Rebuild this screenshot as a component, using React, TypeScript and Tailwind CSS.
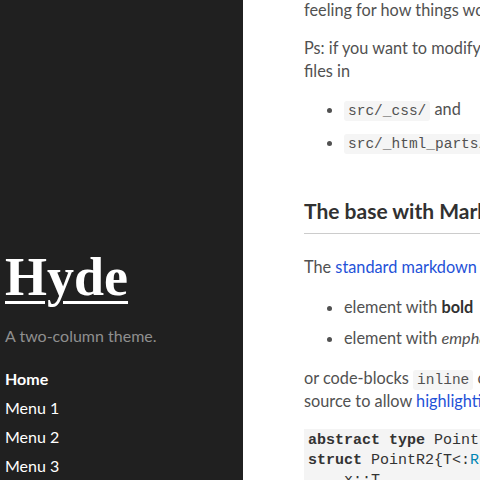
export default function App() {
  return (
    <div className="flex h-[480px] w-[480px] overflow-hidden bg-white font-['Lato','Open_Sans',sans-serif]">
      {/* Sidebar */}
      <aside className="flex w-[243px] shrink-0 flex-col justify-end bg-[#202020] pl-[5px] text-white">
        <h1 className="font-['Liberation_Serif',serif] text-[54px] font-bold leading-none underline decoration-[3px] underline-offset-[6px]">
          <a href="#">Hyde</a>
        </h1>
        <p className="mt-[20px] text-[16px] text-[#8f8f8f]">A two-column theme.</p>
        <nav className="mt-[16px] flex flex-col text-[16px] leading-[29px]">
          <a href="#" className="font-bold">Home</a>
          <a href="#">Menu 1</a>
          <a href="#">Menu 2</a>
          <a href="#">Menu 3</a>
        </nav>
      </aside>

      {/* Content */}
      <main className="min-w-0 flex-1 pl-[61px] text-[16.3px] leading-[22.4px] text-[#515151]">
        <p className="-mt-[1px] whitespace-nowrap">feeling for how things work and look.</p>
        <p className="mt-[16px] whitespace-nowrap">
          Ps: if you want to modify the style, edit the
          <br />
          files in
        </p>
        <ul className="mt-[16px] list-disc pl-[40px]">
          <li className="whitespace-nowrap">
            <code className="rounded-[3px] bg-[#f5f5f5] px-[4px] py-[2px] font-['Liberation_Mono',monospace] text-[14.5px] leading-none">src/_css/</code> and
          </li>
          <li className="mt-[10px] whitespace-nowrap">
            <code className="rounded-[3px] bg-[#f5f5f5] px-[4px] py-[2px] font-['Liberation_Mono',monospace] text-[14.5px] leading-none">src/_html_parts/</code>
          </li>
        </ul>

        <h2 className="mt-[44px] whitespace-nowrap text-[21px] font-bold leading-[28px] text-[#313131]">
          The base with Markdown
        </h2>
        <hr className="mt-[8px] border-t border-[#cccccc]" />

        <p className="mt-[22px] whitespace-nowrap">
          The <a href="#" className="text-[#1f52d8]">standard markdown</a> syntax
        </p>
        <ul className="mt-[18px] list-disc pl-[40px]">
          <li className="whitespace-nowrap">
            element with <strong className="text-[#313131]">bold</strong>
          </li>
          <li className="mt-[8px] whitespace-nowrap">
            element with <em>emphasis</em>
          </li>
        </ul>
        <p className="mt-[18px] whitespace-nowrap">
          or code-blocks{" "}
          <code className="rounded-[3px] bg-[#f5f5f5] px-[4px] py-[2px] font-['Liberation_Mono',monospace] text-[14.5px] leading-none">inline</code> or
          <br />
          source to allow <a href="#" className="text-[#1f52d8]">highlighting</a>
        </p>

        <pre className="mt-[17px] whitespace-pre bg-[#f4f4f4] px-[4px] py-[2px] font-['Liberation_Mono',monospace] text-[15px] leading-[20px] text-[#333333]">
          <span className="font-bold">abstract type</span> Point{"{"}T{"}"} end{"\n"}
          <span className="font-bold">struct</span> PointR2{"{"}T&lt;:<span className="text-[#0086b3]">Real</span>{"}"} &lt;: Point{"{"}T{"}"}{"\n"}
          {"    "}x::T{"\n"}
        </pre>
      </main>
    </div>
  );
}
